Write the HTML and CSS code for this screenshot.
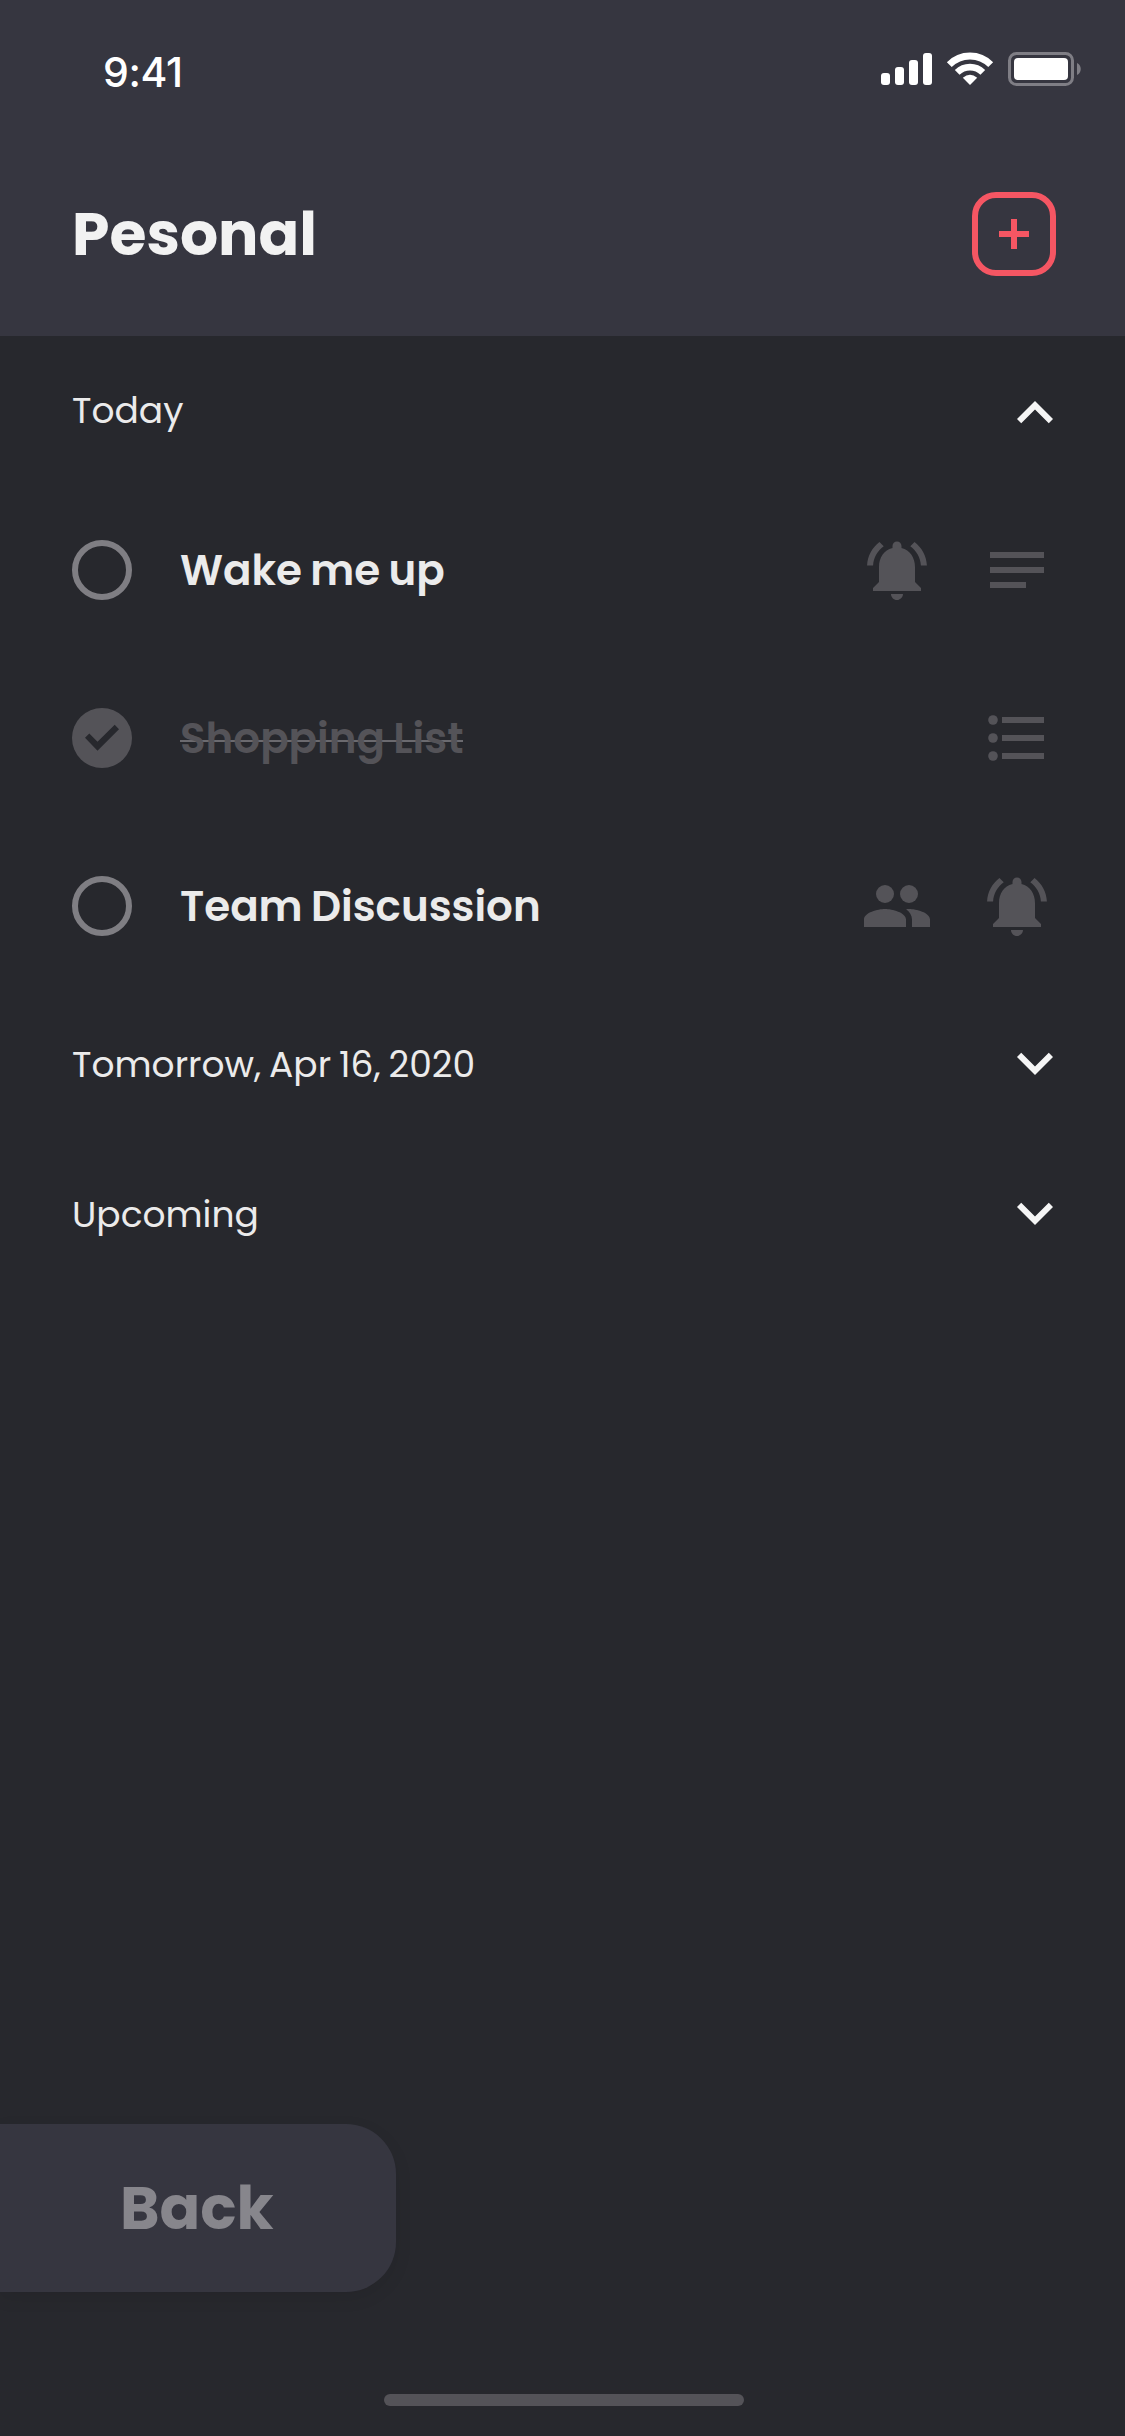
FILE: index.html
```html
<!DOCTYPE html>
<html lang="en">
<head>
<meta charset="utf-8">
<title>Pesonal</title>
<link rel="stylesheet" href="styles.css">
</head>
<body>
<svg class="sprite" aria-hidden="true">
  <symbol id="bell" viewBox="0 0 24 24"><path d="M7.58 4.08L6.15 2.65C3.75 4.48 2.17 7.3 2.03 10.5h2c.15-2.65 1.51-4.97 3.55-6.42zm12.39 6.42h2c-.15-3.2-1.73-6.02-4.12-7.85l-1.42 1.43c2.02 1.45 3.39 3.77 3.54 6.42zM18 11c0-3.07-1.64-5.64-4.5-6.32V4c0-.83-.67-1.5-1.5-1.5s-1.5.67-1.5 1.5v.68C7.63 5.36 6 7.92 6 11v5l-2 2v1h16v-1l-2-2v-5zm-6 11c.14 0 .27-.01.4-.04.65-.14 1.18-.58 1.44-1.18.1-.24.15-.5.15-.78h-4c.01 1.1.9 2 2.01 2z"/></symbol>
  <symbol id="notes" viewBox="0 0 24 24"><path d="M3 18h12v-2H3v2zM3 6v2h18V6H3zm0 7h18v-2H3v2z"/></symbol>
  <symbol id="bullets" viewBox="0 0 24 24"><circle cx="4" cy="6" r="1.6"/><circle cx="4" cy="12" r="1.6"/><circle cx="4" cy="18" r="1.6"/><path d="M7 5h14v2H7zM7 11h14v2H7zM7 17h14v2H7z"/></symbol>
  <symbol id="group" viewBox="0 0 24 24"><circle cx="8" cy="8" r="3"/><circle cx="16" cy="8" r="3"/><path d="M8 13c-2.33 0-7 1.17-7 3.5V19h14v-2.5c0-2.33-4.67-3.5-7-3.5zm8 0c-.29 0-.62.02-.97.05 1.16.84 1.97 1.97 1.97 3.45V19h6v-2.5c0-2.33-4.67-3.5-7-3.5z"/></symbol>
  <symbol id="down" viewBox="0 0 24 24"><path d="M16.59 8.59L12 13.17 7.41 8.59 6 10l6 6 6-6z"/></symbol>
  <symbol id="up" viewBox="0 0 24 24"><path d="M12 8l-6 6 1.41 1.41L12 10.83l4.59 4.58L18 14z"/></symbol>
</svg>
<div class="screen">
  <header class="header">
    <div class="status">
      <span class="time">9:41</span>
      <svg class="indicators" viewBox="0 0 202 38">
        <g fill="#fff">
          <rect x="1" y="23" width="9" height="12" rx="3"/>
          <rect x="15" y="17" width="9" height="18" rx="3"/>
          <rect x="29" y="10" width="9" height="25" rx="3"/>
          <rect x="43" y="3" width="9" height="32" rx="3"/>
          <path d="M90 35L82.8 27.8Q90 21.6 97.2 27.8Z"/>
          <rect x="134" y="8" width="54" height="22" rx="4"/>
        </g>
        <g fill="none" stroke="#fff" stroke-width="6.8">
          <path d="M69.3 14.7A29 29 0 0 1 110.7 14.7"/>
          <path d="M77.2 22.4A18.4 18.4 0 0 1 102.8 22.4"/>
        </g>
        <rect x="129.500" y="3.500" width="63" height="31" rx="7" fill="none" stroke="#7f7e85" stroke-width="3"/>
        <path d="M197 13C202 15 202 23 197 25Z" fill="#7f7e85"/>
      </svg>
    </div>
    <div class="titlebar">
      <h1 class="title">Pesonal</h1>
      <button class="add" aria-label="Add task"><svg viewBox="0 0 30 30"><path d="M12 0h6v12h12v6H18v12h-6V18H0v-6h12z"/></svg></button>
    </div>
  </header>
  <main class="list">
    <div class="section"><span class="label">Today</span><svg class="icon chevron chevron-up"><use href="#up"/></svg></div>
    <div class="task">
      <span class="ring"></span><span class="name">Wake me up</span>
      <div class="icons"><svg class="icon"><use href="#bell"/></svg><svg class="icon"><use href="#notes"/></svg></div>
    </div>
    <div class="task done">
      <svg class="check" viewBox="0 0 60 60"><circle cx="30" cy="30" r="30" fill="#545358"/><path d="M13 29.700L17.300 25.500 25.500 33.800 42.700 16.800 47 21.200 25.500 42.700Z" fill="#27282d"/></svg><span class="name">Shopping List</span>
      <div class="icons"><svg class="icon"><use href="#bullets"/></svg></div>
    </div>
    <div class="task">
      <span class="ring"></span><span class="name">Team Discussion</span>
      <div class="icons"><svg class="icon"><use href="#group"/></svg><svg class="icon"><use href="#bell"/></svg></div>
    </div>
    <div class="section"><span class="label">Tomorrow, Apr 16, 2020</span><svg class="icon chevron"><use href="#down"/></svg></div>
    <div class="section"><span class="label">Upcoming</span><svg class="icon chevron"><use href="#down"/></svg></div>
  </main>
  <footer class="footer">
    <button class="back">Back</button>
    <div class="home"></div>
  </footer>
</div>
</body>
</html>
```
FILE: styles.css
```css
* { box-sizing: border-box; }
body {
  margin: 0;
  background: #27282d;
  color: #ebebeb;
  font-family: Poppins, Inter, "Open Sans", sans-serif;
}
.sprite { position: absolute; width: 0; height: 0; }
.screen { width: 1125px; height: 2436px; display: flex; flex-direction: column; overflow: hidden; }
.header { height: 336px; background: #363640; flex: none; }
.status { height: 132px; padding: 50px 43px 0 103px; display: flex; justify-content: space-between; align-items: flex-start; }
.time { color: #fff; font-family: Inter, "Open Sans", sans-serif; font-size: 41px; font-weight: 500; line-height: 44px; letter-spacing: -0.4px; }
.indicators { width: 202px; height: 38px; }
.titlebar { height: 204px; padding: 0 69px 0 72px; display: flex; justify-content: space-between; align-items: center; }
.title { margin: 0; color: #f2f2f2; font-size: 60px; line-height: 84px; font-weight: 700; }
.add {
  width: 84px; height: 84px; padding: 0; display: grid; place-items: center;
  border: 6px solid #f55663; border-radius: 24px; background: none;
}
.add svg { width: 30px; height: 30px; fill: #f55663; }
.list { flex: 1; }
.section { height: 150px; padding: 0 54px 0 72px; display: flex; justify-content: space-between; align-items: center; }
.label { font-size: 36px; font-weight: 400; line-height: 54px; word-spacing: -1.7px; }
.icon { width: 72px; height: 72px; fill: #545358; }
.chevron { fill: #f5f5f5; margin-bottom: 5px; }
.chevron-up { margin: 4px 0 0; }
.task { height: 168px; padding: 0 72px; display: flex; align-items: center; gap: 48px; }
.ring { width: 60px; height: 60px; border: 6px solid #7f7e83; border-radius: 50%; }
.check { width: 60px; height: 60px; }
.name { font-size: 42px; font-weight: 600; line-height: 63px; white-space: nowrap; word-spacing: -1.7px; }
.done .name {
  color: #545358;
  background: linear-gradient(#6b6a6f, #6b6a6f) 0 33px / 100% 2px no-repeat;
}
.icons { margin-left: auto; display: flex; gap: 48px; }
.footer { height: 312px; flex: none; display: flex; flex-direction: column; align-items: flex-start; }
.back {
  width: 396px; height: 168px; padding: 0 0 0 120px; text-align: left;
  border: 0; border-radius: 0 50px 50px 0; background: #363640; color: #87868c;
  font: inherit; font-size: 60px; font-weight: 700;
  box-shadow: 0 6px 18px rgba(0, 0, 0, 0.08);
}
.home { width: 360px; height: 12px; margin: 102px 0 0 384px; border-radius: 6px; background: #545358; }
```
